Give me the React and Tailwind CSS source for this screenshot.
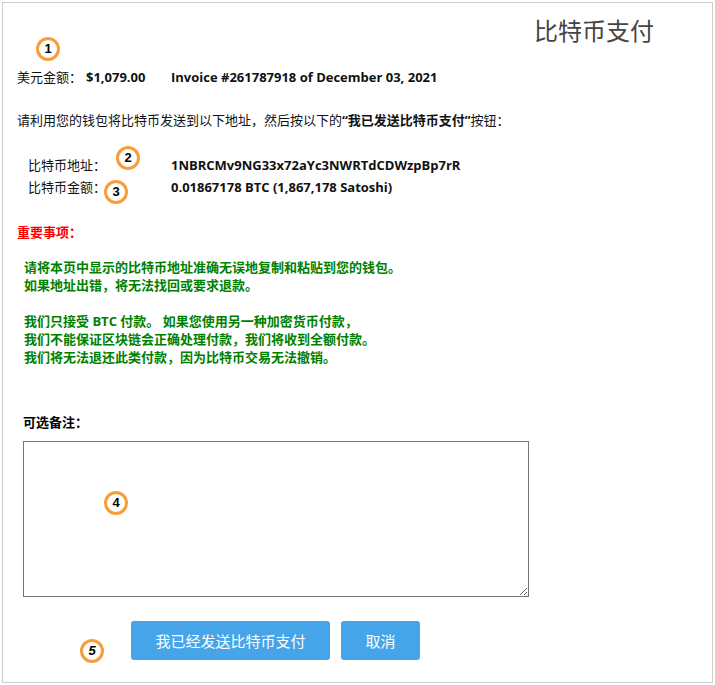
import React from 'react';

const FONT = "font-['Open_Sans','Noto_Sans_CJK_SC',sans-serif]";

const Badge = ({ n, className }) => (
  <div className={`absolute flex h-[24px] w-[24px] items-center justify-center rounded-full border-[3px] border-[#f99d3a] bg-white font-['Liberation_Sans',sans-serif] text-[13px] font-bold text-black ${className}`}>
    {n}
  </div>
);

const App = () => {
  return (
    <div className={`${FONT} h-[685px] w-[715px] bg-white p-[2px] text-[13px] leading-[18px] text-[#111]`}>
      <div className="relative h-[681px] w-[711px] border border-[#ccc] pl-[14px]">
        <h1 className="h-[65px] pt-[13px] pl-[517px] text-[24px] leading-[30px] font-normal text-[#444]">比特币支付</h1>

        <div className="flex h-[18px] items-center">
          <span className="w-[69px]">美元金额：</span>
          <span className="w-[85px] font-bold">$1,079.00</span>
          <span className="font-bold">Invoice #261787918 of December 03, 2021</span>
        </div>

        <p className="mt-[25px]">
          请利用您的钱包将比特币发送到以下地址，然后按以下的<b>“我已发送比特币支付”</b>按钮：
        </p>

        <div className="mt-[27px] flex flex-col gap-[4px] pl-[11px]">
          <div className="flex">
            <span className="w-[143px]">比特币地址：</span>
            <span className="font-bold">1NBRCMv9NG33x72aYc3NWRTdCDWzpBp7rR</span>
          </div>
          <div className="flex">
            <span className="w-[143px]">比特币金额：</span>
            <span className="font-bold">0.01867178 BTC (1,867,178 Satoshi)</span>
          </div>
        </div>

        <p className="mt-[27px] font-bold text-[#ff0000]">重要事项：</p>

        <div className="mt-[17px] pl-[7px] font-bold text-[#008000]">
          <p>请将本页中显示的比特币地址准确无误地复制和粘贴到您的钱包。</p>
          <p>如果地址出错，将无法找回或要求退款。</p>
          <p className="mt-[18px]">我们只接受 BTC 付款。 如果您使用另一种加密货币付款，</p>
          <p>我们不能保证区块链会正确处理付款，我们将收到全额付款。</p>
          <p>我们将无法退还此类付款，因为比特币交易无法撤销。</p>
        </div>

        <div className="mt-[47px] pl-[6px]">
          <label className="block font-bold text-black">可选备注：</label>
          <textarea className="mt-[10px] block h-[156px] w-[506px] border border-[#767676] bg-white"></textarea>
        </div>

        <div className="mt-[24px] flex gap-[11px] pl-[114px]">
          <button className="h-[39px] w-[199px] rounded-[3px] bg-[#46a5e8] text-[15px] text-white">我已经发送比特币支付</button>
          <button className="h-[39px] w-[79px] rounded-[3px] bg-[#46a5e8] text-[15px] text-white">取消</button>
        </div>

        <Badge n="1" className="left-[33px] top-[34px]" />
        <Badge n="2" className="left-[113px] top-[143px]" />
        <Badge n="3" className="left-[101px] top-[177px]" />
        <Badge n="4" className="left-[101px] top-[488px]" />
        <Badge n={<i>5</i>} className="left-[77px] top-[636px]" />
      </div>
    </div>
  );
};

export default App;
